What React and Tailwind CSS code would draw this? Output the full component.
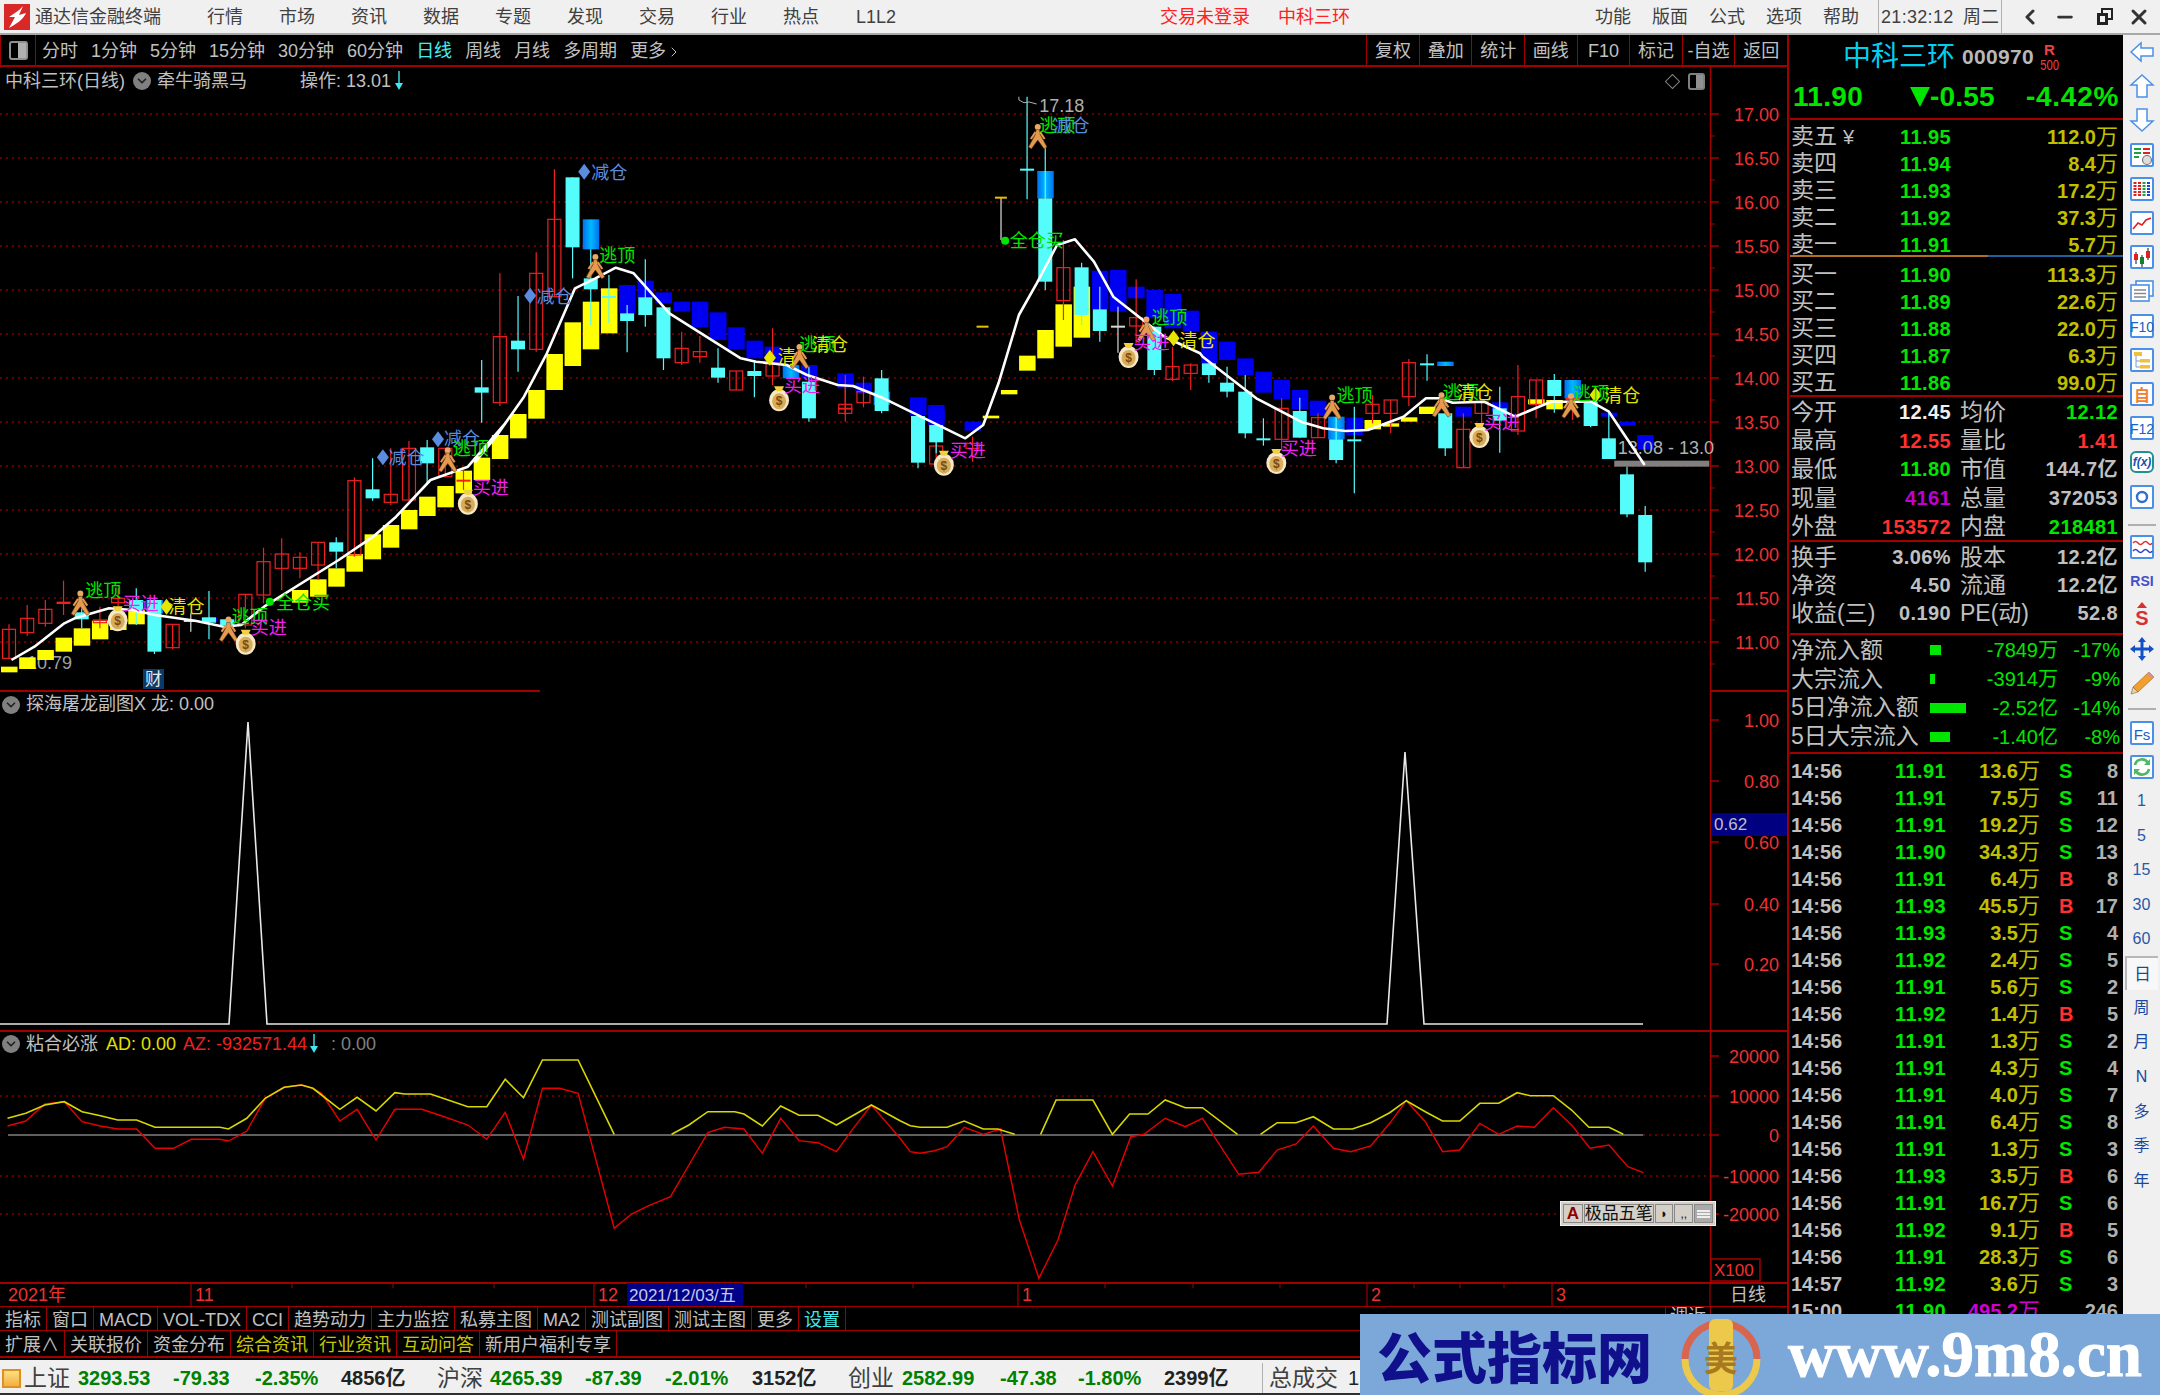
import React from 'react';
import { ChevronLeft, Minus, X, ChevronDown, ChevronRight } from 'lucide-react';

// crop coordinates -> page pixels (read off the three chart crops)
const m7 = (x, y) => [x / 1.742, 380 + y / 3];
const m8 = (x, y) => [450 + x / 1.96, 90 + y / 3];
const m9 = (x, y) => [1100 + x / 2.24, 270 + y / 3];
const m10 = (x, y) => [x / 1.742, 1030 + y / 3];
const m11 = (x, y) => [900 + x / 1.742, 1030 + y / 3];

const RED_LINE = '#a00000';
const AXIS_RED = '#f03030';
const GREEN = '#00e600';
const YEL = '#e6e600';
const MAG = '#f020f0';
const CYAN = '#55fcfc';
const BLUE_LABEL = '#5a8ce0';

const snap = (x) => 9 + 18.18 * Math.round((x - 9) / 18.18);

// [x, kind, top, bottom, high, low]
const candles7 = [
  [14, 'r', 748, 835, 733, 835], [45, 'r', 715, 758, 675, 768], [80, 'r', 688, 730, 660, 740],
  [111, 'R', 665, 672, 602, 705], [143, 'c', 697, 718, 640, 745], [174, 'r', 720, 728, 680, 745],
  [207, 'r', 655, 668, 625, 700], [240, 'c', 660, 695, 625, 735], [272, 'c', 660, 815, 650, 822],
  [302, 'r', 733, 803, 733, 808], [336, 'w', 720, 722, 700, 755], [367, 'c', 712, 728, 633, 778],
  [398, 'c', 718, 735, 715, 750], [430, 'r', 643, 735, 643, 745], [463, 'r', 545, 645, 503, 670],
  [495, 'r', 522, 565, 475, 630], [526, 'r', 532, 565, 517, 595], [558, 'r', 487, 555, 487, 600],
  [592, 'c', 487, 515, 472, 565], [623, 'r', 302, 525, 292, 530], [655, 'c', 328, 355, 235, 362],
  [688, 'r', 343, 367, 205, 375], [720, 'r', 205, 360, 183, 362], [752, 'c', 202, 250, 180, 315],
  [783, 'r', 205, 290, 205, 292], [817, 'R', 299, 301, 270, 330],
];
const candles8 = [
  [72, 'c', 892, 908, 810, 998], [108, 'r', 740, 938, 550, 948], [143, 'c', 752, 778, 618, 845],
  [180, 'r', 550, 778, 487, 785], [216, 'r', 388, 620, 238, 622], [252, 'c', 262, 472, 262, 565],
  [287, 'c', 565, 598, 478, 705], [325, 'c', 618, 623, 555, 700], [360, 'c', 670, 693, 645, 787],
  [396, 'c', 622, 675, 508, 710], [430, 'c', 652, 805, 652, 840], [468, 'r', 775, 818, 725, 825],
  [504, 'r', 785, 800, 738, 818], [540, 'c', 833, 863, 775, 878], [575, 'r', 843, 900, 843, 900],
  [612, 'c', 843, 858, 810, 922], [648, 'r', 820, 858, 715, 885], [718, 'c', 875, 985, 830, 995],
  [757, 'r', 955, 970, 885, 995], [792, 'r', 943, 957, 855, 975], [827, 'r', 905, 938, 860, 952],
  [862, 'c', 865, 963, 840, 970], [900, 'c', 978, 1118, 978, 1135], [937, 'r', 1068, 1122, 1050, 1145],
  [970, 'c', 1005, 1057, 1005, 1090], [1010, 'r', 1060, 1075, 1040, 1115], [1115, 'c', 236, 242, 20, 328],
  [1153, 'c', 325, 575, 165, 600], [1189, 'r', 533, 632, 450, 690], [1225, 'c', 532, 675, 518, 705],
  [1260, 'c', 658, 723, 590, 755], [1297, 'w', 707, 710, 650, 788], [1333, 'r', 683, 708, 568, 760],
  [1368, 'c', 710, 840, 710, 855], [1404, 'r', 830, 868, 770, 873], [1441, 'r', 825, 850, 820, 900],
  [1478, 'c', 820, 855, 820, 878], [1512, 'c', 878, 905, 830, 922],
];
const candles9 = [
  [310, 'c', 365, 490, 315, 505], [356, 'c', 505, 509, 445, 527], [396, 'r', 415, 508, 385, 540],
  [436, 'c', 423, 503, 383, 503], [477, 'r', 443, 503, 430, 503], [521, 'c', 508, 570, 440, 580],
  [561, 'c', 508, 512, 410, 670], [601, 'r', 403, 430, 375, 460], [642, 'r', 390, 430, 390, 490],
  [686, 'r', 278, 380, 267, 408], [726, 'c', 280, 284, 253, 332], [766, 'c', 430, 535, 380, 558],
  [806, 'r', 478, 593, 430, 593], [850, 'r', 395, 430, 395, 460], [890, 'c', 415, 452, 350, 548],
  [930, 'r', 380, 483, 285, 495], [975, 'r', 330, 403, 330, 445], [1015, 'c', 330, 378, 312, 428],
  [1055, 'R', 384, 386, 384, 450], [1095, 'c', 395, 468, 395, 472], [1140, 'c', 505, 567, 430, 567],
  [1180, 'c', 613, 733, 590, 742], [1220, 'c', 735, 877, 708, 905],
];

// [x, kind, top, bottom]  y = yellow, b = blue, g = blue/cyan overlap
const bars7 = [
  [15, 'y', 860, 877], [45, 'y', 832, 867], [80, 'y', 810, 840], [111, 'y', 773, 815], [143, 'y', 745, 797],
  [174, 'y', 722, 778], [207, 'y', 735, 750], [240, 'y', 690, 733], [272, 'g', 660, 700], [367, 'b', 712, 726],
  [398, 'b', 718, 735], [527, 'y', 630, 668], [558, 'y', 598, 650], [592, 'y', 565, 620], [623, 'y', 522, 575],
  [655, 'y', 463, 538], [688, 'y', 435, 503], [720, 'y', 390, 448], [752, 'y', 350, 408], [783, 'y', 318, 382],
  [817, 'y', 272, 340],
];
const bars8 = [
  [72, 'y', 1103, 1170], [108, 'y', 1035, 1107], [143, 'y', 972, 1045], [180, 'y', 900, 986], [216, 'y', 792, 900],
  [252, 'y', 697, 828], [287, 'y', 635, 778], [325, 'y', 595, 730], [287, 'g', 388, 478], [360, 'b', 585, 670],
  [396, 'b', 572, 625], [430, 'b', 607, 640], [468, 'b', 635, 665], [504, 'b', 635, 712], [540, 'b', 667, 750],
  [575, 'b', 712, 778], [612, 'b', 752, 805], [648, 'b', 770, 820], [683, 'g', 825, 865], [718, 'b', 825, 865],
  [757, 'b', 850, 885], [792, 'b', 865, 895], [827, 'b', 878, 910], [862, 'g', 905, 945], [900, 'b', 922, 975],
  [937, 'b', 945, 990], [970, 'b', 968, 1005], [1010, 'b', 995, 1022], [1045, 'y', 977, 985], [1080, 'y', 900, 913],
  [1115, 'y', 797, 842], [1153, 'y', 720, 805], [1189, 'y', 643, 770], [1225, 'y', 590, 743], [1153, 'g', 243, 325],
  [1260, 'b', 542, 658], [1297, 'b', 540, 665], [1333, 'b', 590, 625], [1368, 'b', 600, 685], [1404, 'b', 612, 715],
  [1441, 'b', 662, 725], [1478, 'b', 725, 820], [1512, 'b', 755, 810],
];
const bars9 = [
  [310, 'b', 265, 315], [356, 'b', 305, 368], [396, 'b', 330, 388], [436, 'b', 360, 418], [477, 'b', 392, 438],
  [521, 'g', 440, 508], [561, 'b', 443, 495], [601, 'y', 450, 478], [642, 'y', 460, 470], [686, 'y', 442, 455],
  [726, 'y', 410, 432], [766, 'g', 275, 288], [806, 'b', 410, 440], [890, 'b', 397, 425], [975, 'y', 388, 403],
  [1015, 'y', 390, 418], [1055, 'g', 330, 385], [1140, 'b', 428, 440], [1180, 'b', 455, 467], [1220, 'b', 495, 538],
];

const maLine = [
  ...[[20, 840], [60, 800], [112, 730], [130, 715], [190, 685], [230, 690], [270, 705], [340, 722], [390, 740], [420, 735], [460, 680], [590, 540], [650, 470], [690, 410], [750, 300], [815, 260], [880, 130]].map(([x, y]) => m7(x, y)),
  ...[[50, 1115], [90, 1040], [145, 920], [190, 790], [245, 595], [285, 565], [325, 533], [360, 550], [430, 670], [570, 805], [600, 815], [660, 825], [700, 855], [760, 885], [790, 888], [850, 925], [1010, 1045], [1045, 1005], [1075, 880], [1115, 675], [1150, 580], [1190, 465], [1225, 448], [1262, 515], [1300, 620], [1350, 680], [1400, 740], [1470, 790]].map(([x, y]) => m8(x, y)),
  ...[[230, 260], [350, 385], [450, 455], [500, 475], [550, 483], [600, 480], [680, 440], [730, 385], [760, 385], [790, 398], [860, 395], [930, 440], [1010, 395], [1100, 395], [1140, 425], [1220, 585]].map(([x, y]) => m9(x, y)),
];

const labels = [
  [m7, 180, 633, '逃顶', GREEN], [m7, 245, 673, '买进', MAG], [m7, 325, 680, '清仓', YEL], [m7, 435, 712, '逃顶', GREEN],
  [m7, 468, 745, '买进', MAG], [m7, 528, 668, '全仓买', GREEN], [m7, 708, 235, '减仓', BLUE_LABEL], [m7, 805, 178, '减仓', BLUE_LABEL],
  [m7, 820, 208, '逃顶', GREEN], [m7, 855, 325, '买进', MAG],
  [m8, 312, 250, '减仓', BLUE_LABEL], [m8, 205, 620, '减仓', BLUE_LABEL], [m8, 328, 497, '逃顶', GREEN], [m8, 720, 765, '逃顶', GREEN],
  [m8, 745, 765, '清仓', YEL], [m8, 660, 802, '清', YEL], [m8, 690, 888, '买进', MAG], [m8, 1015, 1082, '买进', MAG],
  [m8, 1190, 108, '逃顶', GREEN], [m8, 1218, 108, '减仓', BLUE_LABEL], [m8, 1150, 452, '全仓买', GREEN], [m8, 1410, 685, '逃顶', GREEN],
  [m8, 1375, 760, '买进', MAG], [m8, 1465, 752, '清仓', YEL],
  [m9, 570, 378, '逃顶', GREEN], [m9, 445, 537, '买进', MAG], [m9, 808, 368, '逃顶', GREEN], [m9, 840, 368, '清仓', YEL],
  [m9, 900, 460, '买进', MAG], [m9, 1100, 372, '逃顶', GREEN], [m9, 1170, 378, '清仓', YEL],
];
const persons = [m7(140, 670), m7(398, 748), m7(780, 240), m8(285, 530), m8(685, 800), m8(1152, 140), m8(1365, 718), m9(520, 412), m9(765, 405), m9(1055, 408)];
const bags = [m7(205, 715), m7(428, 785), m7(815, 365), m8(645, 925), m8(968, 1118), m8(1330, 795), m9(395, 573), m9(850, 495)];
const diamonds = [
  [m7(290, 680), YEL], [m7(667, 232), BLUE_LABEL], [m7(763, 178), BLUE_LABEL], [m8(263, 245), BLUE_LABEL],
  [m8(157, 617), BLUE_LABEL], [m8(627, 803), YEL], [m8(1418, 745), YEL], [m9(1110, 375), YEL],
];

const yellow10 = [[13, 265], [45, 250], [78, 225], [112, 215], [143, 245], [175, 257], [205, 270], [238, 270], [270, 292], [383, 292], [398, 297], [430, 265], [462, 205], [495, 172], [525, 165], [545, 175], [560, 195], [592, 238], [622, 202], [655, 243], [688, 188], [705, 192], [750, 192], [815, 230], [848, 230], [880, 148], [912, 203], [945, 90], [1007, 90], [1070, 313]];
const yellowB = [[1170, 313], [1200, 285], [1233, 245], [1280, 245], [1296, 252], [1328, 288], [1360, 228], [1392, 256], [1425, 256], [1457, 285], [1518, 225], [1568, 272]];
const yellow11a = [[0, 272], [18, 287], [35, 292], [82, 292], [112, 273], [145, 297], [170, 297], [200, 313]];
const yellow11b = [[245, 313], [272, 210], [336, 210], [370, 313], [400, 252], [432, 252], [462, 210], [497, 233], [527, 233], [588, 313]];
const yellow11c = [[628, 313], [657, 278], [690, 278], [720, 260], [755, 297], [788, 297], [820, 278], [853, 248], [882, 212], [915, 245], [945, 273], [975, 273], [1010, 220], [1043, 220], [1075, 188], [1098, 197], [1138, 197], [1170, 240], [1200, 292], [1235, 292], [1260, 313]];
const red10 = [[13, 288], [45, 273], [78, 222], [112, 215], [143, 275], [175, 288], [205, 297], [238, 297], [270, 355], [302, 355], [333, 328], [383, 328], [398, 333], [430, 303], [462, 205], [495, 172], [525, 165], [545, 175], [560, 190], [592, 273], [622, 238], [655, 330], [688, 238], [735, 238], [770, 258], [815, 285], [848, 328], [880, 247], [912, 388], [945, 175], [975, 175], [1007, 190], [1070, 595], [1100, 552], [1130, 527], [1168, 500], [1200, 405], [1233, 308], [1262, 292], [1296, 297], [1328, 370], [1360, 265], [1392, 332], [1425, 338], [1457, 365], [1485, 298], [1518, 225], [1568, 325]];
const red11 = [[0, 325], [18, 365], [35, 370], [60, 362], [82, 350], [112, 292], [145, 313], [175, 297], [208, 570], [242, 745], [275, 630], [305, 465], [336, 365], [370, 468], [402, 320], [425, 313], [462, 265], [497, 290], [527, 265], [590, 433], [625, 427], [657, 360], [690, 342], [720, 288], [755, 355], [785, 365], [820, 348], [853, 280], [882, 212], [915, 275], [945, 365], [975, 360], [1010, 280], [1043, 313], [1075, 288], [1105, 292], [1138, 233], [1170, 285], [1202, 355], [1235, 345], [1268, 410], [1295, 428]];

const pts = (arr) => arr.map(([x, y]) => `${x.toFixed(1)},${y.toFixed(1)}`).join(' ');
const over = (map, arr) => arr.map(([x, y]) => map(x, y));

const Bar = ({ d, map }) => {
  const [x0, top] = map(d[0], d[2]);
  const [, bot] = map(d[0], d[3]);
  const x = snap(x0);
  const fill = d[1] === 'y' ? '#ffff00' : d[1] === 'b' ? '#0000f0' : 'url(#cyanBlue)';
  return <rect x={x - 8} y={top} width={16.5} height={bot - top} fill={fill} />;
};

const Candle = ({ d, map }) => {
  const [x0, top] = map(d[0], d[2]);
  const [, bot] = map(d[0], d[3]);
  const [, hi] = map(d[0], d[4]);
  const [, lo] = map(d[0], d[5]);
  const x = snap(x0);
  const k = d[1];
  const color = k === 'c' ? CYAN : k === 'w' ? '#d8d8d8' : '#f02020';
  return (
    <g>
      <line x1={x} x2={x} y1={hi} y2={lo} stroke={color} strokeWidth="1.2" />
      {k === 'c' || k === 'R' || k === 'w' ? (
        <rect x={x - 7} y={top} width={14} height={Math.max(bot - top, 2)} fill={color} />
      ) : (
        <rect x={x - 6.5} y={top} width={13} height={bot - top} fill="none" stroke={color} strokeWidth="1.2" />
      )}
    </g>
  );
};

const Person = ({ p }) => (
  <g transform={`translate(${p[0]},${p[1]}) scale(1.15)`}>
    <circle cx="0" cy="-8.5" r="2.6" fill="#e8a868" />
    <path d="M-1.5 -6 L1.5 -6 L2 -2 L8 9 L5.5 10.5 L0 3 L-5.5 10.5 L-8 9 L-2 -2 Z" fill="#e59a50" stroke="#6a4018" strokeWidth="0.5" />
    <path d="M-2 -4 L-6 2 M2 -4 L6 2" stroke="#e59a50" strokeWidth="1.8" />
  </g>
);

const Bag = ({ p }) => (
  <g transform={`translate(${p[0]},${p[1]})`}>
    <ellipse cx="0" cy="2" rx="10" ry="11" fill="#f6e8c4" />
    <ellipse cx="0" cy="3" rx="7" ry="8" fill="#d8ac58" />
    <path d="M-5 -12 L5 -12 L2.5 -7 L-2.5 -7 Z" fill="#f2d23c" />
    <text x="0" y="7" fontSize="12" fontWeight="700" textAnchor="middle" fill="#7a4a10">$</text>
  </g>
);

const Diamond = ({ p, c }) => (
  <polygon points={`${p[0]},${p[1] - 8} ${p[0] + 6},${p[1]} ${p[0]},${p[1] + 8} ${p[0] - 6},${p[1]}`} fill={c} />
);

const AxisLabel = ({ y, t }) => (
  <text x="1779" y={y + 1} fontSize="18" fill={AXIS_RED} textAnchor="end" dominantBaseline="central">{t}</text>
);

const priceY = (p) => 554 + (12 - p) * 88;
const prices = [17, 16.5, 16, 15.5, 15, 14.5, 14, 13.5, 13, 12.5, 12, 11.5, 11];

const MainChart = () => (
  <svg viewBox="0 95 1787 595" className="block w-[1787px] h-[595px] overflow-visible">
    <defs>
      <linearGradient id="cyanBlue" x1="0" x2="1" y1="0" y2="0">
        <stop offset="0" stopColor="#0070f0" />
        <stop offset="0.5" stopColor="#00b8ff" />
        <stop offset="1" stopColor="#0070f0" />
      </linearGradient>
    </defs>
    <line x1="1710.5" x2="1710.5" y1="67" y2="690" stroke={RED_LINE} strokeWidth="1.5" />
    {prices.map((p) => (
      <g key={p}>
        <line x1="0" x2="1710" y1={priceY(p)} y2={priceY(p)} stroke="#c00000" strokeWidth="1" strokeDasharray="2 4" />
        <line x1="1710" x2="1719" y1={priceY(p)} y2={priceY(p)} stroke={RED_LINE} strokeWidth="1.5" />
        <line x1="1710" x2="1715" y1={priceY(p) + 22} y2={priceY(p) + 22} stroke={RED_LINE} strokeWidth="1" />
        <AxisLabel y={priceY(p)} t={p.toFixed(2)} />
      </g>
    ))}

    <text x="27" y="663" fontSize="18" fill="#a0a0a0" dominantBaseline="central">10.79</text>

    {bars7.map((d, i) => <Bar key={i} d={d} map={m7} />)}
    {bars8.map((d, i) => <Bar key={i} d={d} map={m8} />)}
    {bars9.map((d, i) => <Bar key={i} d={d} map={m9} />)}
    {candles7.map((d, i) => <Candle key={i} d={d} map={m7} />)}
    {candles8.map((d, i) => <Candle key={i} d={d} map={m8} />)}
    {candles9.map((d, i) => <Candle key={i} d={d} map={m9} />)}

    {/* loose marks around the 17.18 high */}
    <line x1={m8(1080, 0)[0]} x2={m8(1080, 0)[0]} y1={m8(0, 322)[1]} y2={m8(0, 450)[1]} stroke="#e0e0e0" strokeWidth="1.2" />
    <rect x={m8(1068, 0)[0]} y={m8(0, 320)[1]} width="12" height="2" fill="#e8c000" />
    <rect x={m8(1032, 0)[0]} y={m8(0, 707)[1]} width="12" height="2" fill="#e8c000" />
    <polyline points={pts(over(m8, [[1115, 20], [1115, 30], [1125, 38], [1135, 36], [1150, 42]]))} fill="none" stroke="#b0b0b0" strokeWidth="1" />
    <text x={m8(1155, 0)[0]} y={m8(0, 48)[1]} fontSize="18" fill="#b0b0b0" dominantBaseline="central">17.18</text>

    {/* support band */}
    <rect x={m9(1152, 0)[0]} y={m9(0, 572)[1]} width="95" height="6" fill="#808080" />
    <text x={m9(1160, 0)[0]} y={m9(0, 535)[1]} fontSize="18" fill="#b0b0b0" dominantBaseline="central">13.08 - 13.0</text>

    <polyline points={pts(maLine)} fill="none" stroke="#ffffff" strokeWidth="2.6" strokeLinejoin="round" />

    {persons.map((p, i) => <Person key={i} p={p} />)}
    {bags.map((p, i) => <Bag key={i} p={p} />)}
    {diamonds.map(([p, c], i) => <Diamond key={i} p={p} c={c} />)}
    <circle cx={m8(1088, 0)[0]} cy={m8(0, 452)[1]} r="4" fill={GREEN} />
    <circle cx={m7(470, 0)[0]} cy={m7(0, 665)[1]} r="4" fill={GREEN} />
    {labels.map(([map, x, y, t, c], i) => {
      const [px, py] = map(x, y);
      return <text key={i} x={px} y={py} fontSize="18" fill={c} textAnchor="middle" dominantBaseline="central">{t}</text>;
    })}

    <rect x="143" y="669" width="21" height="20" fill="#0a3a6a" />
    <text x="153.5" y="679" fontSize="17" fill="#e8e8e8" textAnchor="middle" dominantBaseline="central">财</text>
  </svg>
);

const PeakChart = () => (
  <svg viewBox="0 717 1787 313" className="block w-[1787px] h-[313px] overflow-visible">
    <line x1="1710.5" x2="1710.5" y1="690" y2="1030" stroke={RED_LINE} strokeWidth="1.5" />
    {[[1, 720], [0.8, 781], [0.6, 842], [0.4, 904], [0.2, 964]].map(([v, y]) => (
      <g key={v}>
        <line x1="1710" x2="1719" y1={y} y2={y} stroke={RED_LINE} strokeWidth="1.5" />
        <AxisLabel y={y} t={v.toFixed(2)} />
      </g>
    ))}
    <rect x="1711" y="813" width="76" height="23" fill="#000080" />
    <text x="1714" y="824.5" fontSize="17" fill="#c0c0c0" dominantBaseline="central">0.62</text>
    <polyline points="0,1024 229,1024 248,722 267,1024 1387,1024 1405,752 1424,1024 1643,1024" fill="none" stroke="#e8e8e8" strokeWidth="1.6" />
  </svg>
);

const OscChart = () => (
  <svg viewBox="0 1056 1787 226" className="block w-[1787px] h-[226px] overflow-visible">
    <line x1="1710.5" x2="1710.5" y1="1030" y2="1282" stroke={RED_LINE} strokeWidth="1.5" />
    {[1096, 1176, 1214].map((y) => (
      <line key={y} x1="0" x2="1710" y1={y} y2={y} stroke="#c00000" strokeWidth="1" strokeDasharray="2 4" />
    ))}
    <line x1="1643" x2="1710" y1="1135" y2="1135" stroke="#c00000" strokeWidth="1" strokeDasharray="2 4" />
    {[[1056, '20000'], [1096, '10000'], [1135, '0'], [1176, '-10000'], [1214, '-20000']].map(([y, t]) => (
      <g key={y}>
        <line x1="1710" x2="1719" y1={y} y2={y} stroke={RED_LINE} strokeWidth="1.5" />
        <AxisLabel y={y} t={t} />
      </g>
    ))}
    <line x1="8" x2="1643" y1="1135" y2="1135" stroke="#808080" strokeWidth="1.6" />
    <polyline points={pts(over(m10, red10))} fill="none" stroke="#e80000" strokeWidth="1.4" />
    <polyline points={pts(over(m11, red11))} fill="none" stroke="#e80000" strokeWidth="1.4" />
    {[over(m10, yellow10), over(m10, yellowB), over(m11, yellow11a), over(m11, yellow11b), over(m11, yellow11c)].map((l, i) => (
      <polyline key={i} points={pts(l)} fill="none" stroke="#d8d800" strokeWidth="1.6" />
    ))}
    <rect x="1711" y="1259" width="49" height="22" fill="none" stroke={RED_LINE} strokeWidth="1.5" />
    <text x="1714" y="1270" fontSize="17" fill={AXIS_RED} dominantBaseline="central">X100</text>
  </svg>
);

const DateAxis = () => (
  <svg viewBox="0 1282 1787 24" className="block w-[1787px] h-[24px]">
    <line x1="0" x2="1787" y1="1283" y2="1283" stroke={RED_LINE} strokeWidth="2" />
    {[191, 594, 1018, 1367, 1552, 1710].map((x) => (
      <line key={x} x1={x} x2={x} y1="1283" y2="1306" stroke={RED_LINE} strokeWidth="1.2" />
    ))}
    {[292, 393, 494, 806, 913, 1105, 1193, 1280, 1414, 1460, 1504].map((x) => (
      <line key={x} x1={x} x2={x} y1="1283" y2="1288" stroke={RED_LINE} strokeWidth="1" />
    ))}
    {[[8, '2021年'], [195, '11'], [598, '12'], [1022, '1'], [1371, '2'], [1556, '3']].map(([x, t]) => (
      <text key={x} x={x} y="1295" fontSize="18" fill={AXIS_RED} dominantBaseline="central">{t}</text>
    ))}
    <rect x="627" y="1283" width="116" height="23" fill="#000088" />
    <text x="629" y="1295" fontSize="17" fill="#c8c8e8" dominantBaseline="central">2021/12/03/五</text>
    <text x="1730" y="1295" fontSize="18" fill="#c0c0c0" dominantBaseline="central">日线</text>
  </svg>
);

const CollapseDot = () => (
  <span className="w-[18px] h-[18px] rounded-full bg-[#808080] flex items-center justify-center shrink-0">
    <ChevronDown className="w-[14px] h-[14px] text-[#222]" strokeWidth={3} />
  </span>
);

const DownArrow = () => (
  <svg viewBox="0 0 10 20" className="w-[10px] h-[20px] shrink-0">
    <path d="M5 0 V14" stroke="#40e8f0" strokeWidth="1.4" />
    <path d="M1 12 H9 L5 19 Z" fill="#40e8f0" />
  </svg>
);

const periods = ['分时', '1分钟', '5分钟', '15分钟', '30分钟', '60分钟', '日线', '周线', '月线', '多周期'];
const topTools = ['复权', '叠加', '统计', '画线', 'F10', '标记', '-自选', '返回'];

const ChartToolbar = () => (
  <div className="h-[32px] flex items-center border-b-2 border-[#a00000] text-[18px] text-[#c0c0c0]">
    <div className="w-[36px] h-full flex items-center justify-center border-r border-[#a00000] border-l">
      <span className="w-[19px] h-[19px] border-2 border-[#909090] rounded-[3px] flex justify-end">
        <span className="w-[8px] h-full bg-[#b0b0b0]" />
      </span>
    </div>
    <div className="flex items-center gap-[13px] ml-[6px] pt-[3px]">
      {periods.map((p) => (
        <span key={p} className={p === '日线' ? 'text-[#40f0f0]' : ''}>{p}</span>
      ))}
      <span className="flex items-center">更多<ChevronRight className="w-[16px] h-[18px]" strokeWidth={1.5} /></span>
    </div>
    <div className="ml-auto flex h-full">
      {topTools.map((t) => (
        <span key={t} className="w-[52.6px] h-full flex items-center justify-center border-l border-[#a00000] pt-[3px]">{t}</span>
      ))}
    </div>
  </div>
);

const tabs1 = ['指标', '窗口', 'MACD', 'VOL-TDX', 'CCI', '趋势动力', '主力监控', '私募主图', 'MA2', '测试副图', '测试主图', '更多'];
const tabs2 = [['扩展∧', 'text-[#c0c0c0]'], ['关联报价', 'text-[#c0c0c0]'], ['资金分布', 'text-[#c0c0c0]'], ['综合资讯', 'text-[#c8c800]'], ['行业资讯', 'text-[#c8c800]'], ['互动问答', 'text-[#c8c800]'], ['新用户福利专享', 'text-[#c0c0c0]']];

const ChartColumn = () => (
  <div className="w-[1787px] shrink-0 flex flex-col">
    <ChartToolbar />
    {/* price panel */}
    <div className="h-[623px]">
      <div className="h-[28px] flex items-center text-[18px] text-[#c0c0c0] pl-[5px]">
        <span className="w-[128px]">中科三环(日线)</span>
        <CollapseDot />
        <span className="ml-[6px] w-[143px]">牵牛骑黑马</span>
        <span>操作: 13.01</span>
        <span className="ml-[3px]"><DownArrow /></span>
        <div className="ml-auto flex items-center mr-[82px] gap-[10px]">
          <span className="w-[11px] h-[11px] rotate-45 border border-[#808080]" />
          <span className="w-[17px] h-[17px] border-2 border-[#808080] rounded-[3px] flex justify-end"><span className="w-[7px] h-full bg-[#909090]" /></span>
        </div>
      </div>
      <MainChart />
    </div>
    {/* signal panel, its top rule stops short of the axis */}
    <div className="h-[340px]">
      <div className="h-[2px] flex justify-between">
        <span className="w-[540px] bg-[#a00000]" />
        <span className="w-[77px] bg-[#a00000]" />
      </div>
      <div className="h-[25px] flex items-center text-[18px] text-[#c0c0c0] pl-[2px] gap-[6px]">
        <CollapseDot />
        <span>探海屠龙副图X 龙: 0.00</span>
      </div>
      <PeakChart />
    </div>
    {/* oscillator panel */}
    <div className="h-[252px] border-t-2 border-[#a00000] relative">
      <div className="h-[24px] flex items-center text-[18px] pl-[2px]">
        <CollapseDot />
        <span className="ml-[6px] w-[80px] text-[#c0c0c0]">粘合必涨</span>
        <span className="text-[#e0e000] w-[77px]">AD: 0.00</span>
        <span className="text-[#f02020]">AZ: -932571.44</span>
        <span className="ml-[2px]"><DownArrow /></span>
        <span className="text-[#808080] ml-[12px]">: 0.00</span>
      </div>
      <OscChart />
      {/* input method bar floats over the chart */}
      <div className="absolute left-[1560px] top-[169px] w-[156px] h-[25px] bg-[#d4d0c8] border border-[#f0f0f0] flex items-stretch text-[17px] text-[#111] p-[2px] gap-[1px]">
        <span className="w-[20px] flex items-center justify-center text-[#900000] font-bold border border-[#888]">A</span>
        <span className="flex-1 flex items-center justify-center border border-[#888] whitespace-nowrap">极品五笔</span>
        <span className="w-[19px] flex items-center justify-center border border-[#888] text-[13px]">◗</span>
        <span className="w-[19px] flex items-center justify-center border border-[#888] text-[12px]">,,</span>
        <span className="w-[19px] flex flex-col justify-center gap-[1px] border border-[#888] bg-[#aaa] px-[2px]">
          <span className="h-[2px] bg-[#eee]" /><span className="h-[2px] bg-[#eee]" /><span className="h-[2px] bg-[#eee]" />
        </span>
      </div>
    </div>
    <DateAxis />
    <div className="h-[25px] flex border-y border-[#a00000] text-[18px] text-[#c0c0c0] leading-none">
      {tabs1.map((t) => (
        <span key={t} className="px-[5px] pt-[2px] flex items-center border-r border-[#a00000]">{t}</span>
      ))}
      <span className="px-[5px] pt-[2px] flex items-center border-r border-[#a00000] text-[#40e8e8]">设置</span>
      <span className="ml-auto w-[46px] flex items-start justify-center border-x border-[#a00000] overflow-hidden">调近</span>
      <span className="w-[76px]" />
    </div>
    <div className="h-[27px] flex border-b-2 border-[#a00000] text-[18px] leading-none">
      {tabs2.map(([t, c]) => (
        <span key={t} className={`px-[5px] pt-[3px] flex items-center border-r border-[#a00000] ${c}`}>{t}</span>
      ))}
    </div>
  </div>
);

const asks = [['卖五', '11.95', '112.0'], ['卖四', '11.94', '8.4'], ['卖三', '11.93', '17.2'], ['卖二', '11.92', '37.3'], ['卖一', '11.91', '5.7']];
const bids = [['买一', '11.90', '113.3'], ['买二', '11.89', '22.6'], ['买三', '11.88', '22.0'], ['买四', '11.87', '6.3'], ['买五', '11.86', '99.0']];

const BookRow = ({ r, extra }) => (
  <div className="h-[27px] pb-[3px] grid grid-cols-[64px_96px_1fr] items-center">
    <span className="text-[23px] text-[#c0c0c0] whitespace-nowrap leading-none">{r[0]}{extra}</span>
    <span className="text-right text-[20px] font-bold text-[#00e600] tracking-[0.4px]">{r[1]}</span>
    <span className="text-right text-[20px] font-bold text-[#c0c000]">{r[2]}<span className="font-normal text-[22px]">万</span></span>
  </div>
);

const stats1 = [
  ['今开', '12.45', 'text-[#f0f0f0]', '均价', '12.12', 'text-[#00e600]'],
  ['最高', '12.55', 'text-[#ff3030]', '量比', '1.41', 'text-[#ff3030]'],
  ['最低', '11.80', 'text-[#00e600]', '市值', '144.7亿', 'text-[#c0c0c0]'],
  ['现量', '4161', 'text-[#c000d0]', '总量', '372053', 'text-[#c0c0c0]'],
  ['外盘', '153572', 'text-[#ff3030]', '内盘', '218481', 'text-[#00e600]'],
];
const stats2 = [
  ['换手', '3.06%', 'text-[#c0c0c0]', '股本', '12.2亿', 'text-[#c0c0c0]'],
  ['净资', '4.50', 'text-[#c0c0c0]', '流通', '12.2亿', 'text-[#c0c0c0]'],
  ['收益(三)', '0.190', 'text-[#c0c0c0]', 'PE(动)', '52.8', 'text-[#c0c0c0]'],
];

const StatRow = ({ r, h }) => (
  <div className={`${h} grid grid-cols-[64px_96px_1fr_auto] items-center`}>
    <span className="text-[23px] text-[#c0c0c0] whitespace-nowrap leading-none">{r[0]}</span>
    <span className={`text-right text-[20px] font-bold tracking-[0.4px] ${r[2]}`}>{r[1]}</span>
    <span className="pl-[9px] text-[23px] text-[#c0c0c0] whitespace-nowrap leading-none">{r[3]}</span>
    <span className={`text-right text-[20px] font-bold tracking-[0.4px] ${r[5]}`}>{r[4]}</span>
  </div>
);

const flows = [
  ['净流入额', 'w-[11px]', '-7849万', '-17%'],
  ['大宗流入', 'w-[5px]', '-3914万', '-9%'],
  ['5日净流入额', 'w-[36px]', '-2.52亿', '-14%'],
  ['5日大宗流入', 'w-[20px]', '-1.40亿', '-8%'],
];

const ticks = [
  ['14:56', '11.91', '13.6', 'S', '8'], ['14:56', '11.91', '7.5', 'S', '11'], ['14:56', '11.91', '19.2', 'S', '12'],
  ['14:56', '11.90', '34.3', 'S', '13'], ['14:56', '11.91', '6.4', 'B', '8'], ['14:56', '11.93', '45.5', 'B', '17'],
  ['14:56', '11.93', '3.5', 'S', '4'], ['14:56', '11.92', '2.4', 'S', '5'], ['14:56', '11.91', '5.6', 'S', '2'],
  ['14:56', '11.92', '1.4', 'B', '5'], ['14:56', '11.91', '1.3', 'S', '2'], ['14:56', '11.91', '4.3', 'S', '4'],
  ['14:56', '11.91', '4.0', 'S', '7'], ['14:56', '11.91', '6.4', 'S', '8'], ['14:56', '11.91', '1.3', 'S', '3'],
  ['14:56', '11.93', '3.5', 'B', '6'], ['14:56', '11.91', '16.7', 'S', '6'], ['14:56', '11.92', '9.1', 'B', '5'],
  ['14:56', '11.91', '28.3', 'S', '6'], ['14:57', '11.92', '3.6', 'S', '3'], ['15:00', '11.90', '495.2', '', '246'],
];

const QuotePanel = () => (
  <div className="w-[336px] shrink-0 border-l-2 border-[#a00000] flex flex-col overflow-hidden pl-[1px]">
    <div className="h-[41px] pt-[3px] flex items-center pl-[53px] pr-[5px]">
      <span className="text-[28px] leading-none text-[#00d0f0]">中科三环</span>
      <span className="ml-[7px] text-[21px] font-bold text-[#b8b8b8] tracking-[0.3px]">000970</span>
      <span className="ml-[3px] flex flex-col items-center leading-none text-[#f04040]">
        <span className="text-[15px] font-bold">R</span>
        <span className="text-[15px] scale-x-75">500</span>
      </span>
    </div>
    <div className="h-[44px] flex items-center pl-[3px] pr-[4px] border-b-2 border-[#a00000] text-[28px] font-bold text-[#00e600] leading-none">
      <span className="tracking-[0.3px]">11.90</span>
      <span className="ml-[47px] w-0 h-0 border-x-[10px] border-x-transparent border-t-[20px] border-t-[#00e600]" />
      <span className="tracking-[0.2px]">-0.55</span>
      <span className="ml-auto tracking-[0.7px]">-4.42%</span>
    </div>
    <div className="pl-[1px] pr-[5px]">
      {asks.map((r, i) => <BookRow key={r[0]} r={r} extra={i === 0 ? <span className="ml-[6px] text-[20px]">¥</span> : null} />)}
    </div>
    <div className="flex h-[2px] shrink-0">
      <span className="w-[198px] bg-[#b07020]" />
      <span className="flex-1 bg-[#2060a0]" />
    </div>
    <div className="pl-[1px] pr-[5px] pt-[1px] pb-[2px] border-b-2 border-[#a00000]">
      {bids.map((r) => <BookRow key={r[0]} r={r} />)}
    </div>
    <div className="pl-[1px] pr-[5px] border-b-2 border-[#a00000]">
      {stats1.map((r) => <StatRow key={r[0]} r={r} h="h-[28.7px]" />)}
    </div>
    <div className="pl-[1px] pr-[5px] pb-[7px] border-b-2 border-[#a00000]">
      {stats2.map((r) => <StatRow key={r[0]} r={r} h="h-[28px]" />)}
    </div>
    <div className="pl-[1px] pr-[3px] pb-[2px] border-b-2 border-[#a00000]">
      {flows.map((r) => (
        <div key={r[0]} className="h-[28.7px] grid grid-cols-[139px_40px_88px_1fr] items-center">
          <span className="text-[23px] text-[#c0c0c0] whitespace-nowrap leading-none">{r[0]}</span>
          <span className={`h-[10px] bg-[#00e600] ${r[1]}`} />
          <span className="text-right text-[20px] text-[#00e600] whitespace-nowrap">{r[2]}</span>
          <span className="text-right text-[20px] text-[#00e600]">{r[3]}</span>
        </div>
      ))}
    </div>
    <div className="pl-[1px] pr-[5px]">
      {ticks.map((r, i) => (
        <div key={i} className="h-[27px] grid grid-cols-[64px_91px_94px_1fr_40px] items-center text-[20px] font-bold">
          <span className="text-[#c0c0c0]">{r[0]}</span>
          <span className="text-right text-[#00e600] tracking-[0.4px]">{r[1]}</span>
          <span className={`text-right ${r[0] === '15:00' ? 'text-[#d000d0]' : 'text-[#c0c000]'}`}>{r[2]}<span className="font-normal text-[22px]">万</span></span>
          <span className={`pl-[19px] ${r[3] === 'S' ? 'text-[#00e600]' : 'text-[#ff3030]'}`}>{r[3]}</span>
          <span className="text-right text-[#b0b0b0]">{r[4]}</span>
        </div>
      ))}
    </div>
  </div>
);

const ST = '#4a90e8';
const Icon = ({ children }) => (
  <svg viewBox="0 0 28 28" className="w-[28px] h-[28px]">{children}</svg>
);
const Framed = ({ children, s = ST }) => (
  <Icon>
    <rect x="3" y="3" width="22" height="22" fill="#fff" stroke={s} strokeWidth="2" rx="1" />
    {children}
  </Icon>
);
const FramedText = ({ t, size = 14 }) => (
  <Framed><text x="14" y="15" fontSize={size} fill="#2060c0" textAnchor="middle" dominantBaseline="central">{t}</text></Framed>
);

const sideGroup1 = [
  <Icon><path d="M3 14 L13 5 V10 H25 V18 H13 V23 Z" fill="#fff" stroke={ST} strokeWidth="1.5" /></Icon>,
  <Icon><path d="M14 3 L25 13 H19 V25 H9 V13 H3 Z" fill="#fff" stroke={ST} strokeWidth="1.5" /></Icon>,
  <Icon><path d="M14 25 L25 15 H19 V3 H9 V15 H3 Z" fill="#fff" stroke={ST} strokeWidth="1.5" /></Icon>,
  <Framed>
    <path d="M6 8 H13 M6 12 H13 M6 16 H11" stroke="#20a040" strokeWidth="2" />
    <path d="M15 8 H22 M15 12 H22" stroke="#e02020" strokeWidth="2" />
    <circle cx="19" cy="19" r="4.5" fill="#ddd" stroke="#777" strokeWidth="1.2" />
  </Framed>,
  <Framed>
    <path d="M7 7 V21" stroke="#e02020" strokeWidth="3" strokeDasharray="2 1" />
    <path d="M11.5 7 V21" stroke="#e02020" strokeWidth="3" strokeDasharray="2 1" />
    <path d="M16 7 V21" stroke="#20a040" strokeWidth="3" strokeDasharray="2 1" />
    <path d="M20.5 7 V21" stroke="#2040e0" strokeWidth="3" strokeDasharray="2 1" />
  </Framed>,
  <Framed><polyline points="5,20 10,14 14,16 18,11 23,9" fill="none" stroke="#e02020" strokeWidth="1.6" /></Framed>,
  <Framed>
    <path d="M8 9 V21 M14 12 V24 M20 5 V17" stroke="#111" strokeWidth="1" />
    <rect x="6" y="11" width="4" height="6" fill="#e02020" />
    <rect x="12" y="14" width="4" height="7" fill="#108030" />
    <rect x="18" y="8" width="4" height="7" fill="#e02020" />
  </Framed>,
  <Icon>
    <rect x="8" y="4" width="17" height="15" fill="#fff" stroke={ST} strokeWidth="1.6" />
    <rect x="3" y="8" width="18" height="16" fill="#fff" stroke={ST} strokeWidth="1.6" />
    <path d="M6 13 H18 M6 16.5 H18 M6 20 H18" stroke="#888" strokeWidth="1.6" />
  </Icon>,
  <FramedText t="F10" />,
  <Framed>
    <rect x="6" y="6" width="8" height="4" fill="#f0c040" />
    <rect x="12" y="13" width="10" height="3.5" fill="#f0c040" />
    <rect x="12" y="19" width="10" height="3.5" fill="#f0c040" />
    <path d="M8 10 V21 H12 M8 15 H12" stroke="#70a0d0" strokeWidth="1" fill="none" />
  </Framed>,
  <Framed><text x="14" y="15" fontSize="16" fontWeight="700" fill="#f08030" textAnchor="middle" dominantBaseline="central">自</text></Framed>,
  <FramedText t="F12" />,
  <Icon>
    <rect x="3" y="4" width="22" height="20" rx="5" fill="#fff" stroke="#209090" strokeWidth="2" />
    <text x="14" y="14" fontSize="12" fontStyle="italic" fontWeight="700" fill="#2050b0" textAnchor="middle" dominantBaseline="central">f(x)</text>
  </Icon>,
  <Framed><circle cx="14" cy="14" r="5" fill="none" stroke="#3070d0" strokeWidth="2.4" /></Framed>,
];

const sideGroup2 = [
  <Framed>
    <path d="M5 10 q2.5 -3 5 0 t5 0 t5 0 t4 0" stroke="#e03030" strokeWidth="1.5" fill="none" />
    <path d="M5 18 q2.5 -3 5 0 t5 0 t5 0 t4 0" stroke="#3040d0" strokeWidth="1.5" fill="none" />
  </Framed>,
  <Icon><text x="14" y="14" fontSize="14" fontWeight="700" fill="#4050c8" textAnchor="middle" dominantBaseline="central">RSI</text></Icon>,
  <Icon>
    <path d="M14 1 L19 7 H9 Z" fill="#d83030" />
    <text x="14" y="17" fontSize="20" fontWeight="700" fill="#d83030" textAnchor="middle" dominantBaseline="central">S</text>
  </Icon>,
  <Icon>
    <path d="M14 2 L18 7 H10 Z M14 26 L18 21 H10 Z M2 14 L7 10 V18 Z M26 14 L21 10 V18 Z" fill="#1050c8" />
    <path d="M14 7 V21 M7 14 H21" stroke="#1050c8" strokeWidth="3" />
  </Icon>,
  <Icon>
    <path d="M21 3 L26 8 L10 23 L5 18 Z" fill="#f0a030" stroke="#a06010" strokeWidth="0.6" />
    <path d="M5 18 L10 23 L3 25 Z" fill="#e8d0a0" stroke="#806030" strokeWidth="0.6" />
    <path d="M21 3 L26 8 L24 10 L19 5 Z" fill="#d89090" />
  </Icon>,
];

const sideNums = ['1', '5', '15', '30', '60'];
const sidePeriods = ['周', '月', 'N', '多', '季', '年'];

const Sidebar = () => (
  <div className="w-[37px] shrink-0 bg-[#f0f0f0] flex flex-col items-center">
    {sideGroup1.map((ic, i) => <div key={i} className="h-[34.2px] flex items-center justify-center">{ic}</div>)}
    <div className="w-[28px] h-[2px] bg-[#b0b0b0] mt-[10px] mb-[4px]" />
    {sideGroup2.map((ic, i) => <div key={i} className="h-[34.2px] flex items-center justify-center">{ic}</div>)}
    <div className="w-[28px] h-[2px] bg-[#b0b0b0] mt-[7px] mb-[6px]" />
    <div className="h-[34.2px] flex items-center justify-center"><FramedText t="Fs" size={15} /></div>
    <div className="h-[34.2px] flex items-center justify-center">
      <Framed>
        <path d="M7 12 A7 7 0 0 1 20 10 M21 16 A7 7 0 0 1 8 18" stroke="#50b860" strokeWidth="2.6" fill="none" />
        <path d="M22 6 V12 H16 Z M6 22 V16 H12 Z" fill="#50b860" />
      </Framed>
    </div>
    {sideNums.map((n) => (
      <div key={n} className="h-[34.5px] flex items-center text-[16px] text-[#2858a8]">{n}</div>
    ))}
    <div className="w-[33px] h-[34px] flex items-center justify-center text-[17px] text-[#1848a0] border-t-2 border-l-2 border-[#b8b8b8] bg-[#f8f8f8]">日</div>
    {sidePeriods.map((n) => (
      <div key={n} className="h-[34.6px] flex items-center text-[16px] text-[#1848a0]">{n}</div>
    ))}
  </div>
);

const menus = ['行情', '市场', '资讯', '数据', '专题', '发现', '交易', '行业', '热点'];
const menus2 = ['功能', '版面', '公式', '选项', '帮助'];

const TitleBar = () => (
  <div className="h-[35px] shrink-0 bg-[#f0f0f0] border-b-2 border-[#a8a8a8] flex items-center text-[18px] text-[#404040]">
    <svg viewBox="0 0 26 26" className="w-[26px] h-[26px] ml-[4px] shrink-0">
      <rect width="26" height="26" fill="#d82828" />
      <path d="M19 2 C15 7 9 10 5 13 L11 13 L5 24 C12 20 19 16 22 9 L15 11 Z" fill="#fff" />
    </svg>
    <span className="ml-[5px] pt-[1px]">通达信金融终端</span>
    <div className="ml-[46px] flex gap-[36px] pt-[1px]">
      {menus.map((m) => <span key={m}>{m}</span>)}
    </div>
    <span className="ml-[37px] pt-[1px]">L1L2</span>
    <span className="ml-[264px] pt-[1px] text-[#ff2020]">交易未登录</span>
    <span className="ml-[28px] pt-[1px] text-[#ff2020]">中科三环</span>
    <div className="ml-[245px] flex gap-[21px] pt-[1px]">
      {menus2.map((m) => <span key={m}>{m}</span>)}
    </div>
    <div className="ml-[19px] h-full border-x border-[#b0b0b0] w-[124px] flex items-center justify-between px-[2px] pt-[1px]">
      <span className="tracking-[0.3px]">21:32:12</span>
      <span>周二</span>
    </div>
    <ChevronLeft className="ml-[16px] w-[24px] h-[24px] text-[#333]" strokeWidth={3} />
    <Minus className="ml-[12px] w-[22px] h-[22px] text-[#333]" strokeWidth={3} />
    <span className="ml-[21px] relative w-[16px] h-[17px]">
      <span className="absolute right-0 top-0 w-[12px] h-[12px] border-2 border-[#222]" />
      <span className="absolute left-0 bottom-0 w-[11px] h-[12px] border-[3px] border-[#222] bg-[#f0f0f0]" />
    </span>
    <X className="ml-[14px] w-[24px] h-[24px] text-[#333]" strokeWidth={3} />
  </div>
);

const G = 'text-[#008000] font-bold';
const K = 'text-[#222] font-bold';
const N = 'text-[#404040]';
const statusCells = [
  ['w-[49px]', '上证', N, 'text-[23px]'], ['w-[5px]', '', N, ''], ['w-[95px]', '3293.53', G, ''], ['w-[82px]', '-79.33', G, ''], ['w-[86px]', '-2.35%', G, ''], ['w-[96px]', '4856亿', K, ''],
  ['w-[53px]', '沪深', N, 'text-[23px]'], ['w-[95px]', '4265.39', G, ''], ['w-[80px]', '-87.39', G, ''], ['w-[87px]', '-2.01%', G, ''], ['w-[96px]', '3152亿', K, ''],
  ['w-[54px]', '创业', N, 'text-[23px]'], ['w-[98px]', '2582.99', G, ''], ['w-[78px]', '-47.38', G, ''], ['w-[86px]', '-1.80%', G, ''], ['w-[98px]', '2399亿', K, ''],
];

const StatusBar = () => (
  <div className="h-[35px] shrink-0 bg-[#f0f0f0] border-b-2 border-[#303030] flex items-center text-[20px] pt-[3px]">
    <span className="ml-[2px] w-[19px] h-[19px] border-2 border-[#e09020] bg-gradient-to-b from-[#ffe080] to-[#f0b040] shrink-0" />
    <span className="w-[3px]" />
    {statusCells.map(([w, t, c, s], i) => (
      <span key={i} className={`${w} ${c} ${s} whitespace-nowrap shrink-0 leading-none`}>{t}</span>
    ))}
    <span className="h-full border-l border-[#b0b0b0] pl-[6px] flex items-center text-[23px] text-[#404040] whitespace-nowrap">总成交<span className="ml-[10px] text-[20px] text-[#222]">1</span></span>
  </div>
);

const Watermark = () => (
  <div className="absolute left-[1360px] top-[1314px] w-[800px] h-[81px] bg-[#7ba7d9] flex items-center">
    <span className="ml-[17px] w-[280px] text-[55px] font-black text-[#10108c] leading-none whitespace-nowrap font-['Noto_Sans_CJK_SC',sans-serif]">公式指标网</span>
    <svg viewBox="0 0 84 80" className="ml-[22px] w-[84px] h-[80px] shrink-0">
      <path d="M6 44 A36 36 0 0 1 78 44" fill="none" stroke="#d8654f" strokeWidth="7" />
      <path d="M6 44 A36 36 0 0 0 78 44" fill="none" stroke="#ecc94b" strokeWidth="7" />
      <rect x="30" y="4" width="24" height="72" rx="6" fill="#ecc94b" />
      <text x="42" y="44" fontSize="34" fontWeight="700" fill="#a87a20" textAnchor="middle" dominantBaseline="central">美</text>
    </svg>
    <span className="ml-[25px] text-[65px] font-bold text-white leading-none whitespace-nowrap font-['Liberation_Serif',serif] [-webkit-text-stroke:1px_white]">www.9m8.cn</span>
  </div>
);

export default function App() {
  return (
    <div className="w-[2160px] h-[1395px] relative overflow-hidden bg-black flex flex-col font-['Liberation_Sans','Noto_Sans_CJK_SC',sans-serif]">
      <TitleBar />
      <div className="flex flex-1 min-h-0">
        <ChartColumn />
        <QuotePanel />
        <Sidebar />
      </div>
      <StatusBar />
      <Watermark />
    </div>
  );
}
